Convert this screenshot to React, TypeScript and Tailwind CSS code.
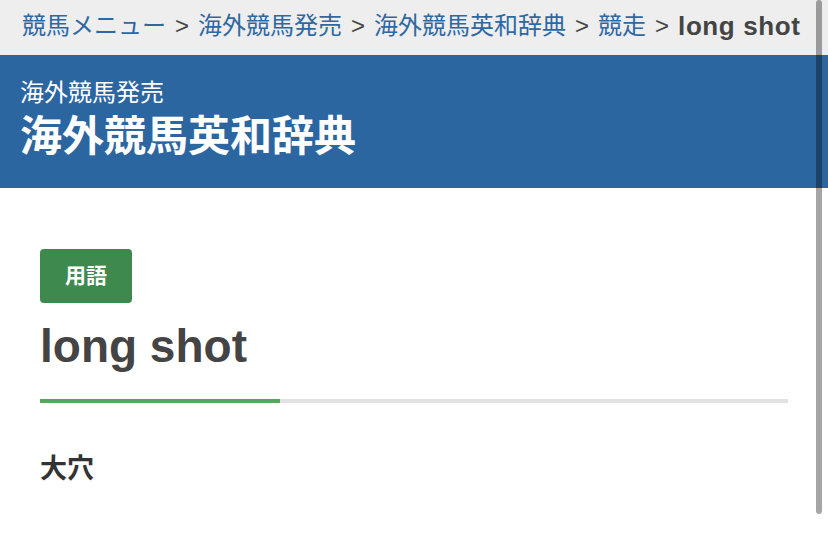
import React from "react";

const FONT = { fontFamily: '"Liberation Sans", "Noto Sans CJK JP", sans-serif' };

function Sep() {
  return <span className="mx-[9px] text-[#444]">&gt;</span>;
}

export default function App() {
  return (
    <div className="relative w-[828px] h-[533px] bg-white overflow-hidden" style={FONT}>
      <nav className="h-[55px] bg-[#eeeeee] flex items-center pl-[22px] pb-[3px] text-[24px] leading-[28px] whitespace-nowrap">
        <a className="text-[#2e68a3]">競馬メニュー</a>
        <Sep />
        <a className="text-[#2e68a3]">海外競馬発売</a>
        <Sep />
        <a className="text-[#2e68a3]">海外競馬英和辞典</a>
        <Sep />
        <a className="text-[#2e68a3]">競走</a>
        <Sep />
        <span className="font-bold text-[#444] text-[26px] tracking-[0.6px]">long shot</span>
      </nav>
      <header className="h-[133px] bg-[#2c66a1] pl-[20px] pt-[24px] flex flex-col text-white">
        <div className="text-[24px] leading-[28px]">海外競馬発売</div>
        <h1 className="mt-[6px] text-[42px] leading-[48px] font-bold">海外競馬英和辞典</h1>
      </header>
      <main className="px-[40px]">
        <div className="mt-[61px] w-[92px] h-[54px] rounded-[4px] bg-[#3e894e] flex items-center justify-center text-white text-[21px] font-bold">
          用語
        </div>
        <h2 className="mt-[17px] text-[46px] leading-[52px] font-bold text-[#444]">long shot</h2>
        <div className="mt-[27px] h-[4px] flex bg-[#e2e2e2]">
          <div className="w-[240px] h-full bg-[#57a55a]" />
        </div>
        <p className="mt-[47px] text-[27px] leading-[38px] font-bold text-[#333]">大穴</p>
      </main>
      <div className="absolute right-[6px] top-0 w-[6px] h-[514px] rounded-full bg-black/35" />
    </div>
  );
}
